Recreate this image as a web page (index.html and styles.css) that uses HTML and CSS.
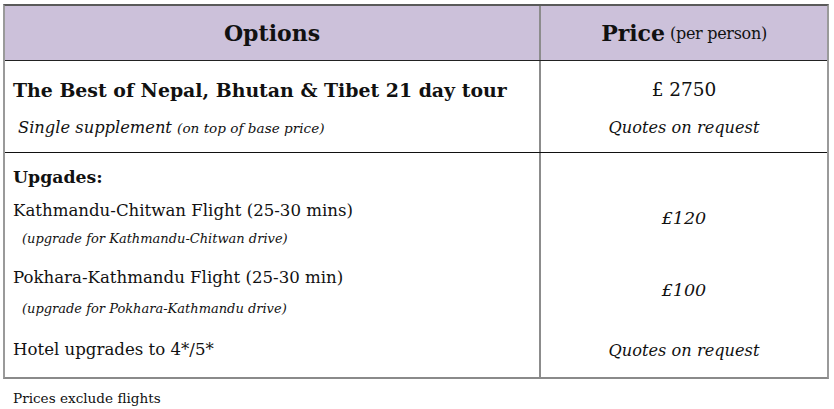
FILE: index.html
```html
<!DOCTYPE html>
<html>
<head>
<meta charset="utf-8">
<link rel="stylesheet" href="styles.css">
</head>
<body>
<div class="wrap">
  <div class="table">
    <div class="row head">
      <div class="cell c1"><span class="h">Options</span></div>
      <div class="cell c2"><span class="h">Price</span> <span class="pp">(per person)</span></div>
    </div>
    <div class="row r1">
      <div class="cell c1">
        <div class="title">The Best of Nepal, Bhutan &amp; Tibet 21 day tour</div>
        <div class="sub">Single supplement <span class="small">(on top of base price)</span></div>
      </div>
      <div class="cell c2">
        <div class="base">£ 2750</div>
        <div class="quote">Quotes on request</div>
      </div>
    </div>
    <div class="row r2">
      <div class="cell c1">
        <div class="upg">Upgades:</div>
        <div class="item i1">Kathmandu-Chitwan Flight (25-30 mins)</div>
        <div class="note n1">(upgrade for Kathmandu-Chitwan drive)</div>
        <div class="item i2">Pokhara-Kathmandu Flight (25-30 min)</div>
        <div class="note n2">(upgrade for Pokhara-Kathmandu drive)</div>
        <div class="item i3">Hotel upgrades to 4*/5*</div>
      </div>
      <div class="cell c2">
        <div class="price p1">£120</div>
        <div class="price p2">£100</div>
        <div class="quote p3">Quotes on request</div>
      </div>
    </div>
  </div>
  <p class="foot">Prices exclude flights</p>
</div>
</body>
</html>
```
FILE: styles.css
```css
* { box-sizing: border-box; }
html, body { margin: 0; padding: 0; background: #fff; }
body {
  font-family: "DejaVu Serif", "Liberation Serif", serif;
  color: #111;
}
.wrap { padding: 4px 0 0 3px; }
.table {
  width: 826px;
  border-left: 2px solid #9a9a9a;
  border-right: 2px solid #9a9a9a;
  border-top: 2px solid #5a5a5a;
  border-bottom: 2px solid #8a8a8a;
}
.row { display: flex; }
.cell { flex: none; }
.c1 { width: 536px; border-right: 2px solid #8c8c8c; }
.c2 { width: 286px; text-align: center; }

.head { height: 55px; background: #ccc1da; border-bottom: 1px solid #222; }
.head .cell { display: flex; align-items: center; justify-content: center; gap: 5px; }
.h { font-weight: bold; font-size: 22px; }
.pp { font-size: 16px; letter-spacing: -0.3px; }

.r1 { height: 92px; border-bottom: 1px solid #111; }
.r1 .c1 { padding: 17px 0 0 8px; }
.title { font-weight: bold; font-size: 18.9px; line-height: 24px; }
.sub { font-style: italic; font-size: 16.3px; line-height: 24px; margin-top: 14px; padding-left: 5px; }
.small { font-size: 13.6px; }
.r1 .c2 { padding-top: 17px; }
.base { font-size: 18.5px; line-height: 24px; }
.quote { font-style: italic; font-size: 16.2px; line-height: 24px; margin-top: 14px; }

.r2 { height: 224px; }
.r2 .c1 { padding: 12px 0 0 8px; }
.upg { font-weight: bold; font-size: 17.3px; line-height: 24px; }
.item { font-size: 16.6px; line-height: 24px; }
.note { font-style: italic; font-size: 13px; line-height: 20px; padding-left: 9px; }
.i1 { margin-top: 10px; }
.n1 { margin-top: 6px; }
.i2 { margin-top: 17px; }
.n2 { margin-top: 9px; }
.i3 { margin-top: 19px; }
.r2 .c2 { padding-top: 53px; }
.price { font-style: italic; font-size: 17.5px; line-height: 24px; }
.p2 { margin-top: 48px; }
.p3 { margin-top: 37px; }

.foot { margin: 9px 0 0 10px; font-size: 13.6px; line-height: 20px; }
```
